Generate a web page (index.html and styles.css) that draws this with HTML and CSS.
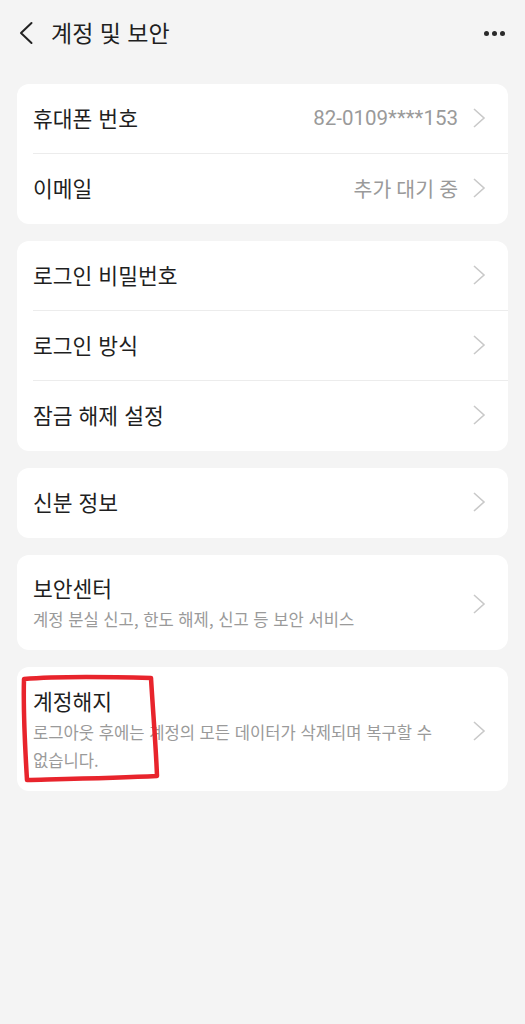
FILE: index.html
```html
<!DOCTYPE html>
<html lang="ko">
<head>
<meta charset="utf-8">
<link rel="stylesheet" href="styles.css">
</head>
<body>
<div class="page">
  <header class="topbar">
    <svg class="back" width="16" height="24" viewBox="0 0 16 24"><path d="M13.5 2 L3 12 L13.5 22" fill="none" stroke="#222" stroke-width="2" stroke-linecap="round" stroke-linejoin="round"/></svg>
    <h1 class="title">계정 및 보안</h1>
    <div class="more"><span></span><span></span><span></span></div>
  </header>

  <section class="card">
    <div class="row">
      <span class="label">휴대폰 번호</span>
      <span class="value">82-0109****153</span>
      <svg class="chev" width="14" height="22" viewBox="0 0 14 22"><path d="M2 2 L12 11 L2 20" fill="none" stroke="#c9c9c9" stroke-width="1.6"/></svg>
    </div>
    <div class="row">
      <span class="label">이메일</span>
      <span class="value">추가 대기 중</span>
      <svg class="chev" width="14" height="22" viewBox="0 0 14 22"><path d="M2 2 L12 11 L2 20" fill="none" stroke="#c9c9c9" stroke-width="1.6"/></svg>
    </div>
  </section>

  <section class="card">
    <div class="row">
      <span class="label">로그인 비밀번호</span>
      <svg class="chev" width="14" height="22" viewBox="0 0 14 22"><path d="M2 2 L12 11 L2 20" fill="none" stroke="#c9c9c9" stroke-width="1.6"/></svg>
    </div>
    <div class="row">
      <span class="label">로그인 방식</span>
      <svg class="chev" width="14" height="22" viewBox="0 0 14 22"><path d="M2 2 L12 11 L2 20" fill="none" stroke="#c9c9c9" stroke-width="1.6"/></svg>
    </div>
    <div class="row">
      <span class="label">잠금 해제 설정</span>
      <svg class="chev" width="14" height="22" viewBox="0 0 14 22"><path d="M2 2 L12 11 L2 20" fill="none" stroke="#c9c9c9" stroke-width="1.6"/></svg>
    </div>
  </section>

  <section class="card">
    <div class="row">
      <span class="label">신분 정보</span>
      <svg class="chev" width="14" height="22" viewBox="0 0 14 22"><path d="M2 2 L12 11 L2 20" fill="none" stroke="#c9c9c9" stroke-width="1.6"/></svg>
    </div>
  </section>

  <section class="card">
    <div class="row tall">
      <div class="texts">
        <div class="label">보안센터</div>
        <div class="sub">계정 분실 신고, 한도 해제, 신고 등 보안 서비스</div>
      </div>
      <svg class="chev" width="14" height="22" viewBox="0 0 14 22"><path d="M2 2 L12 11 L2 20" fill="none" stroke="#c9c9c9" stroke-width="1.6"/></svg>
    </div>
  </section>

  <section class="card marked">
    <div class="row tall">
      <div class="texts">
        <div class="label">계정해지</div>
        <div class="sub">로그아웃 후에는 계정의 모든 데이터가 삭제되며 복구할 수 없습니다.</div>
      </div>
      <svg class="chev" width="14" height="22" viewBox="0 0 14 22"><path d="M2 2 L12 11 L2 20" fill="none" stroke="#c9c9c9" stroke-width="1.6"/></svg>
    </div>
    <svg class="scribble" width="150" height="125" viewBox="0 0 150 125"><path d="M7 12 C40 9 100 10 134 11 C136 45 139 80 140 109 C100 111 50 112 10 113 C8 80 6 45 7 12 Z" fill="none" stroke="#e8242c" stroke-width="4.5" stroke-linejoin="round"/></svg>
  </section>
</div>
</body>
</html>
```

FILE: styles.css
```css
html, body {
  margin: 0;
  padding: 0;
  background: #f4f4f4;
}
body {
  font-family: "Noto Sans CJK KR", "Noto Sans", Roboto, sans-serif;
  color: #1f1f1f;
}
.page {
  width: 525px;
  min-height: 1024px;
  box-sizing: border-box;
  padding: 0 17px;
}
.topbar {
  height: 66px;
  display: flex;
  align-items: center;
  margin-bottom: 18px;
}
.back {
  margin-left: 1px;
  margin-right: 17px;
}
.title {
  margin: 0 0 2px 0;
  font-size: 23px;
  font-weight: 400;
  color: #1f1f1f;
  flex: 1;
}
.more {
  display: flex;
  gap: 3px;
  margin-right: 3px;
}
.more span {
  width: 5px;
  height: 5px;
  border-radius: 50%;
  background: #2a2a2a;
}
.card {
  background: #fff;
  border-radius: 12px;
  margin-bottom: 17px;
  padding-left: 16px;
  position: relative;
}
.row {
  box-sizing: border-box;
  display: flex;
  align-items: center;
  height: 70px;
  padding-right: 22px;
  padding-bottom: 2px;
  border-bottom: 1px solid #ececec;
}
.row:last-of-type {
  border-bottom: none;
}
.label {
  font-size: 21.5px;
  color: #1f1f1f;
  flex: 1;
  line-height: 28px;
}
.value {
  font-family: Roboto, "Noto Sans CJK KR", sans-serif;
  font-size: 20.5px;
  color: #9a9a9a;
  margin-right: 14px;
}
.chev {
  flex: none;
}
.row.tall {
  height: auto;
  padding-top: 19px;
  padding-bottom: 17px;
}
.texts {
  flex: 1;
  padding-right: 22px;
}
.sub {
  font-size: 16.6px;
  color: #9a9a9a;
  line-height: 28px;
  margin-top: 3px;
}
.marked .row.tall {
  padding-top: 20px;
  padding-bottom: 17px;
}
.scribble {
  position: absolute;
  left: 0;
  top: 0;
}
```
